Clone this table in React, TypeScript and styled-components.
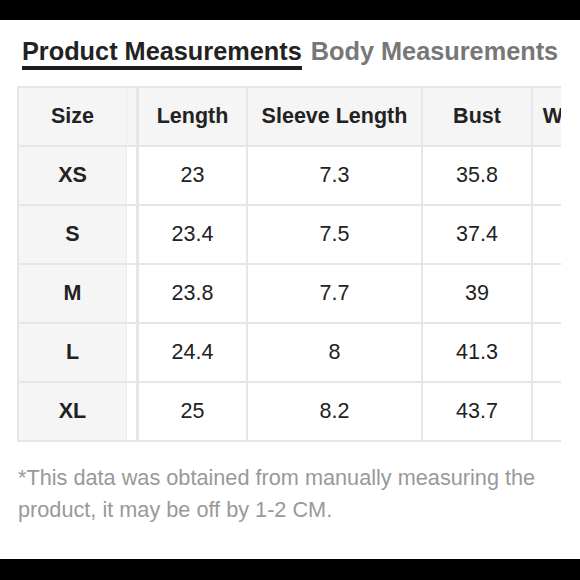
import React from "react";
import styled, { createGlobalStyle } from "styled-components";

const GlobalStyle = createGlobalStyle`
  html, body {
    margin: 0;
    padding: 0;
    background: #000;
  }
  body {
    font-family: "Liberation Sans", Arial, sans-serif;
  }
`;

const Screen = styled.div`
  display: flex;
  flex-direction: column;
  width: 580px;
  height: 580px;
  background: #000;
`;

const Bar = styled.div<{ $h: number }>`
  flex: 0 0 ${(p) => p.$h}px;
  background: #000;
`;

const Sheet = styled.div`
  flex: 1;
  background: #fff;
  display: flex;
  flex-direction: column;
  padding: 16px 0 0 0;
  overflow: hidden;
`;

const Tabs = styled.div`
  padding-left: 22px;
  font-size: 25.3px;
  line-height: 30px;
  font-weight: 700;
  white-space: nowrap;
`;

const Tab = styled.span<{ $active?: boolean }>`
  display: inline-block;
  color: ${(p) => (p.$active ? "#222" : "#777")};
  border-bottom: 4px solid ${(p) => (p.$active ? "#1c1c1c" : "transparent")};
  margin-right: ${(p) => (p.$active ? "9px" : "0")};
`;

const TableWrap = styled.div`
  margin: 16px 0 0 17px;
  width: 544px;
  overflow: hidden;
`;

const Table = styled.table`
  table-layout: fixed;
  width: 594px;
  border-collapse: separate;
  border-spacing: 0;
  border-top: 2px solid #e6e6e6;
  border-left: 2px solid #e6e6e6;
  color: #222;
  font-size: 21.5px;
`;

const Cell = styled.td<{ $head?: boolean; $fixed?: boolean }>`
  box-sizing: border-box;
  height: 59px;
  padding: 0;
  text-align: center;
  vertical-align: middle;
  border-right: 2px solid #e6e6e6;
  border-bottom: 2px solid #e6e6e6;
  font-weight: ${(p) => (p.$head || p.$fixed ? 700 : 400)};
  background: ${(p) => (p.$head || p.$fixed ? "#f5f5f5" : "#fff")};
  white-space: nowrap;
  ${(p) => p.$fixed && "border-right: 1px solid #ececec;"}
`;

const GapCell = styled.td<{ $head?: boolean }>`
  box-sizing: border-box;
  padding: 0;
  border-right: 3px solid #e6e6e6;
  border-bottom: 2px solid #e6e6e6;
  background: ${(p) => (p.$head ? "#f5f5f5" : "#fff")};
`;

const Note = styled.p`
  margin: 20px 0 0 18px;
  width: 543px;
  color: #999;
  font-size: 21.7px;
  line-height: 32px;
`;

const columns = ["Length", "Sleeve Length", "Bust", "Waist"];
const widths = [108, 12, 109, 175, 110, 78];

const rows = [
  { size: "XS", values: ["23", "7.3", "35.8", ""] },
  { size: "S", values: ["23.4", "7.5", "37.4", ""] },
  { size: "M", values: ["23.8", "7.7", "39", ""] },
  { size: "L", values: ["24.4", "8", "41.3", ""] },
  { size: "XL", values: ["25", "8.2", "43.7", ""] },
];

export default function App() {
  return (
    <Screen>
      <GlobalStyle />
      <Bar $h={20} />
      <Sheet>
        <Tabs>
          <Tab $active>Product Measurements</Tab>
          <Tab>Body Measurements</Tab>
        </Tabs>

        <TableWrap>
          <Table>
            <colgroup>
              {widths.map((w, i) => (
                <col key={i} style={{ width: w }} />
              ))}
            </colgroup>
            <thead>
              <tr>
                <Cell as="th" $head $fixed>
                  Size
                </Cell>
                <GapCell as="th" $head />
                {columns.map((c) => (
                  <Cell as="th" key={c} $head>
                    {c}
                  </Cell>
                ))}
              </tr>
            </thead>
            <tbody>
              {rows.map((r) => (
                <tr key={r.size}>
                  <Cell $fixed>{r.size}</Cell>
                  <GapCell />
                  {r.values.map((v, i) => (
                    <Cell key={i}>{v}</Cell>
                  ))}
                </tr>
              ))}
            </tbody>
          </Table>
        </TableWrap>

        <Note>
          *This data was obtained from manually measuring the product, it may be off by 1-2 CM.
        </Note>
      </Sheet>
      <Bar $h={21} />
    </Screen>
  );
}
